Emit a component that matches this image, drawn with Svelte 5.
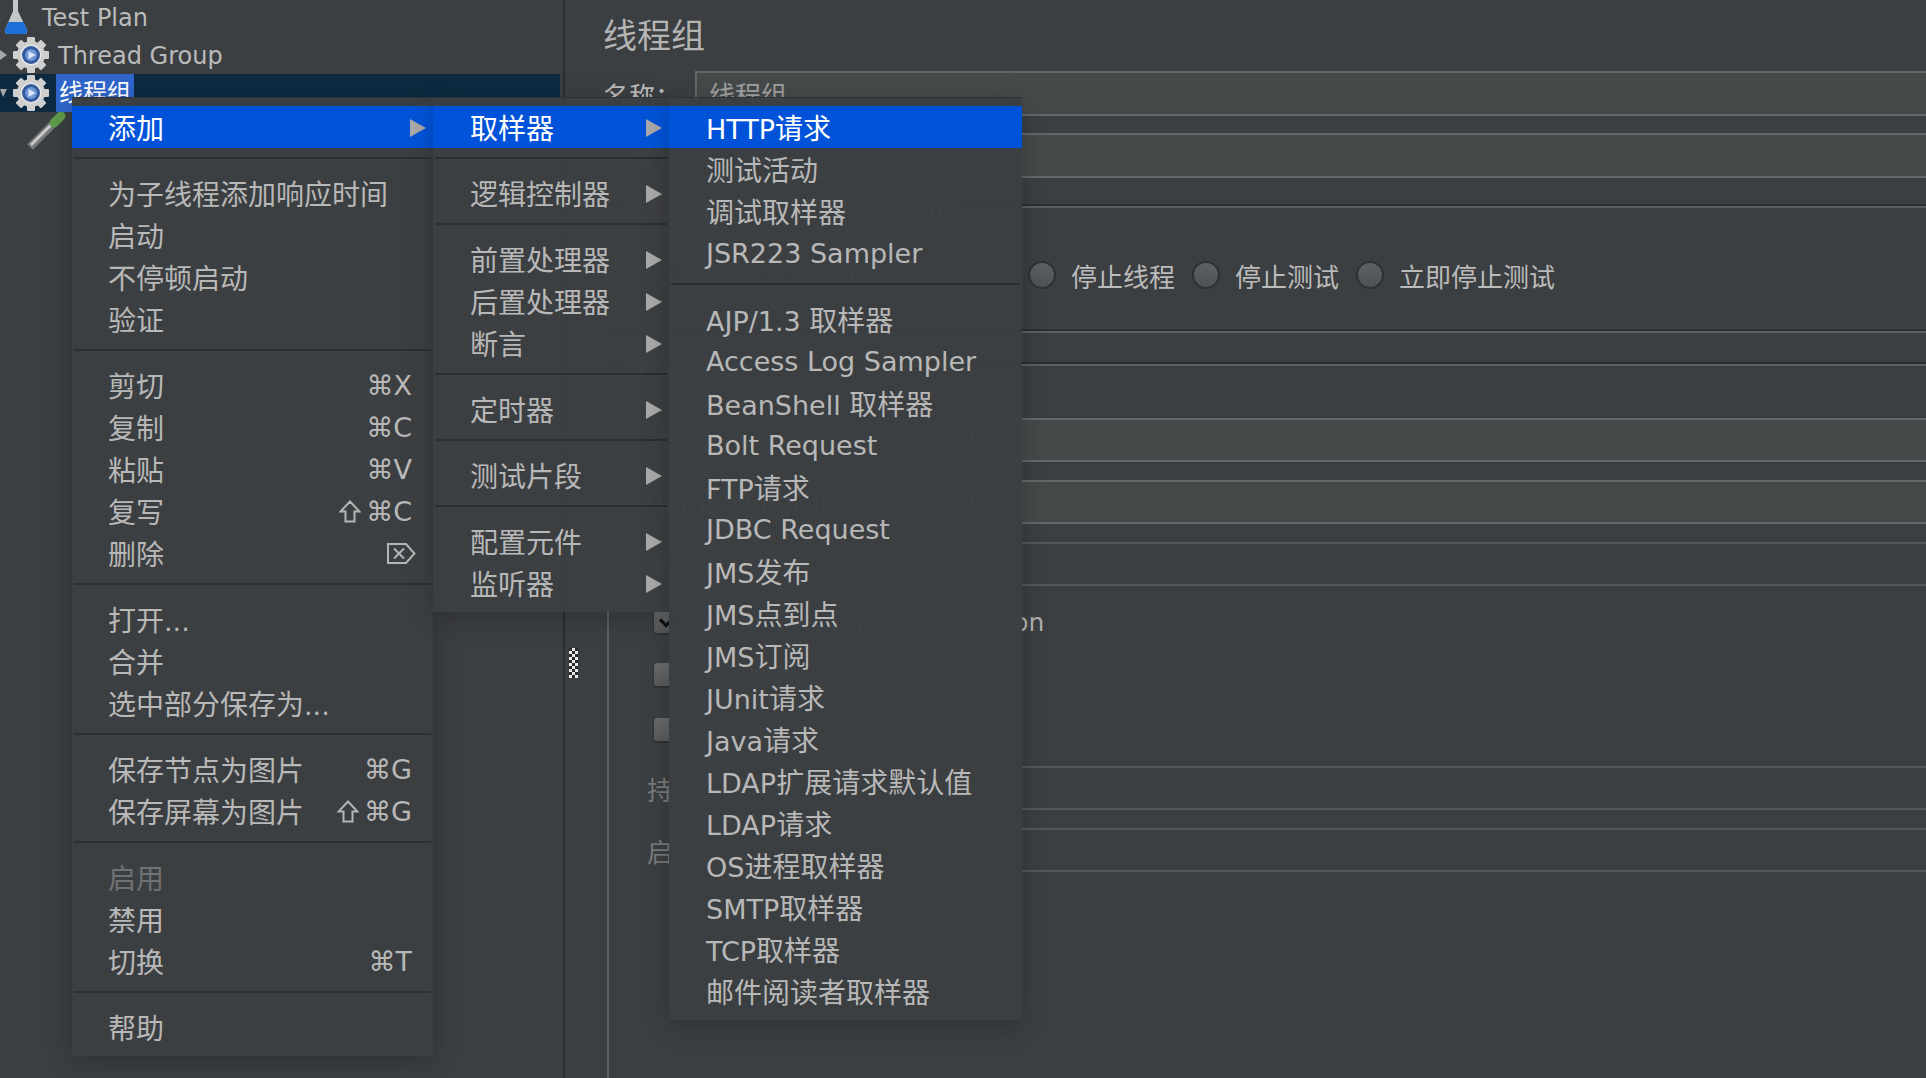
<script>
  const mainMenu = [
    [{ t: "添加", arrow: true, on: true }],
    [{ t: "为子线程添加响应时间" }, { t: "启动" }, { t: "不停顿启动" }, { t: "验证" }],
    [
      { t: "剪切", key: "⌘X" },
      { t: "复制", key: "⌘C" },
      { t: "粘贴", key: "⌘V" },
      { t: "复写", key: "⌘C", shift: true },
      { t: "删除", del: true }
    ],
    [{ t: "打开..." }, { t: "合并" }, { t: "选中部分保存为..." }],
    [
      { t: "保存节点为图片", key: "⌘G" },
      { t: "保存屏幕为图片", key: "⌘G", shift: true }
    ],
    [{ t: "启用", off: true }, { t: "禁用" }, { t: "切换", key: "⌘T" }],
    [{ t: "帮助" }]
  ];

  const addMenu = [
    [{ t: "取样器", arrow: true, on: true }],
    [{ t: "逻辑控制器", arrow: true }],
    [
      { t: "前置处理器", arrow: true },
      { t: "后置处理器", arrow: true },
      { t: "断言", arrow: true }
    ],
    [{ t: "定时器", arrow: true }],
    [{ t: "测试片段", arrow: true }],
    [
      { t: "配置元件", arrow: true },
      { t: "监听器", arrow: true }
    ]
  ];

  const samplerMenu = [
    [{ t: "HTTP请求", on: true }, { t: "测试活动" }, { t: "调试取样器" }, { t: "JSR223 Sampler" }],
    [
      "AJP/1.3 取样器", "Access Log Sampler", "BeanShell 取样器", "Bolt Request", "FTP请求",
      "JDBC Request", "JMS发布", "JMS点到点", "JMS订阅", "JUnit请求", "Java请求",
      "LDAP扩展请求默认值", "LDAP请求", "OS进程取样器", "SMTP取样器", "TCP取样器", "邮件阅读者取样器"
    ].map((t) => ({ t }))
  ];

  const menus = [
    { cls: "main", groups: mainMenu },
    { cls: "add", groups: addMenu },
    { cls: "sampler", groups: samplerMenu }
  ];

  const actions = ["继续", "启动下一进程循环", "停止线程", "停止测试", "立即停止测试"];
  const teeth = [0, 45, 90, 135, 180, 225, 270, 315];

  // latin runs are set a little smaller than the CJK ones
  const runs = (t) =>
    t.split(/([\x00-\x7f]+)/).filter(Boolean).map((s) => ({ s, lat: s.charCodeAt(0) < 128 }));
</script>

{#snippet gear()}
  <svg class="gear" width="38" height="38" viewBox="0 0 38 38">
    <g fill="#cfcfcf">
      {#each teeth as a}
        <rect x="15" y="1" width="8" height="9" rx="1" transform="rotate({a} 19 19)" />
      {/each}
      <circle cx="19" cy="19" r="14" />
    </g>
    <circle cx="19" cy="19" r="10.5" fill="#e4e6e8" />
    <circle cx="19" cy="19" r="9" fill="#34589c" />
    <circle cx="19" cy="19" r="6" fill="#6f98d8" />
    <path d="M16.5 15 L23.5 19 L16.5 23 Z" fill="#dfe8f6" />
  </svg>
{/snippet}

<div class="app">
  <div class="tree">
    <div class="row plan">
      <svg width="26" height="36" viewBox="0 0 26 36">
        <path d="M10 0 H15 V12 L24 31 Q25 35 21 35 H5 Q1 35 2 31 L10 12 Z" fill="#c4c6c8" />
        <path d="M5.5 23 H20.5 L24 31 Q25 35 21 35 H5 Q1 35 2 31 Z" fill="#1c6fd6" />
      </svg>
      <span>Test Plan</span>
    </div>
    <div class="row group-node">
      <svg class="twist" width="7" height="10" viewBox="0 0 7 10"><path d="M0 0 L7 5 L0 10 Z" fill="#a8a8a8" /></svg>
      {@render gear()}
      <span>Thread Group</span>
    </div>
    <div class="row group-node selected">
      <svg class="twist" width="7" height="10" viewBox="0 0 7 10"><path d="M0 1 H7 L3 9 Z" fill="#a8a8a8" /></svg>
      {@render gear()}
      <span class="picked">线程组</span>
    </div>
    <div class="row child">
      <svg width="40" height="38" viewBox="0 0 40 38">
        <path d="M3 35 L26 12" stroke="#77797a" stroke-width="8" />
        <path d="M4 33 L25 12" stroke="#cfcfcf" stroke-width="2.5" />
        <path d="M27 11 L34 4" stroke="#5f9a4a" stroke-width="9" stroke-linecap="round" />
      </svg>
      <span>HTTP请求</span>
    </div>
  </div>

  <div class="detail">
    <div class="title">线程组</div>
    <div class="name-row">
      <span class="name-label">名称：</span>
      <div class="field"><span>线程组</span></div>
    </div>
    <div class="name-row">
      <span class="name-label">注释：</span>
      <div class="field"></div>
    </div>

    <div class="box first">
      <span class="legend">在取样器错误后要执行的动作</span>
      <div class="radios">
        {#each actions as a}
          <label class="radio"><i></i>{a}</label>
        {/each}
      </div>
    </div>

    <div class="box second">
      <span class="legend">线程属性</span>
      <div class="prop"><span>线程数：</span><div class="field"><span>10</span></div></div>
      <div class="prop"><span>Ramp-Up时间(秒)：</span><div class="field"><span>1</span></div></div>
      <div class="prop"><span>循环次数 永远</span><div class="field plain"></div></div>
      <div class="check one"><i class="ticked"></i>Same user on each iteration</div>
      <div class="check two"><i></i>延迟创建线程直到需要</div>
      <div class="check three"><i></i>调度器</div>
      <div class="prop dim timed"><span>持续时间（秒）</span><div class="field plain"></div></div>
      <div class="prop dim"><span>启动延迟（秒）</span><div class="field plain"></div></div>
    </div>
  </div>

  <div class="grip"></div>

  {#each menus as menu}
    <div class="menu {menu.cls}">
      {#each menu.groups as group, g}
        {#if g > 0}<div class="sep"></div>{/if}
        {#each group as item}
          <div class="item" class:on={item.on} class:off={item.off}>
            <span>{#each runs(item.t) as r}{#if r.lat}<span class="lat">{r.s}</span>{:else}{r.s}{/if}{/each}</span>
            {#if item.key}
              <span class="key">
                {#if item.shift}
                  <svg width="22" height="23" viewBox="0 0 22 23" fill="none" stroke="#b4b4b4" stroke-width="2">
                    <path d="M11 1.5 L20.5 11.5 H15.5 V21.5 H6.5 V11.5 H1.5 Z" />
                  </svg>
                {/if}
                {item.key}
              </span>
            {/if}
            {#if item.del}
              <svg class="del" width="29" height="21" viewBox="0 0 29 21" fill="none" stroke="#b4b4b4" stroke-width="2">
                <path d="M1 1 H19 L27.5 10.5 L19 20 H1 Z" />
                <path d="M7 5.5 L17 15.5 M17 5.5 L7 15.5" />
              </svg>
            {/if}
            {#if item.arrow}
              <svg class="arrow" width="16" height="18" viewBox="0 0 16 18"><path d="M0 0 L16 9 L0 18 Z" fill="#a9a9a9" /></svg>
            {/if}
          </div>
        {/each}
      {/each}
    </div>
  {/each}
</div>

<style>
  :global(body) {
    margin: 0;
    background: #3c3f41;
    overflow: hidden;
  }

  .app {
    position: relative;
    display: flex;
    width: 1926px;
    height: 1078px;
    overflow: hidden;
    background: #3c3f41;
    color: #bbbbbb;
    font-family: "DejaVu Sans", "Noto Sans CJK SC", sans-serif;
  }

  /* tree on the left */
  .tree {
    flex: none;
    width: 563px;
    margin-top: -2px;
    border-right: 2px solid #2a2c2d;
    font-size: 24px;
  }
  .row {
    display: flex;
    align-items: center;
    height: 38px;
    width: 560px;
    white-space: nowrap;
  }
  .row > span {
    padding-top: 2px;
  }
  .plan svg {
    margin-left: 3px;
    margin-right: 13px;
  }
  .group-node .twist {
    flex: none;
  }
  .group-node .gear {
    margin-left: 5px;
    margin-right: 8px;
    flex: none;
  }
  .selected {
    background: #0d2a40;
  }
  .row > .picked {
    display: block;
    margin-left: -2px;
    width: 75px;
    padding: 0 0 0 3px;
    line-height: 38px;
    background: #2f65ca;
    color: #ffffff;
  }
  .child svg {
    margin-left: 27px;
    margin-right: 10px;
  }

  /* detail pane */
  .detail {
    flex: none;
    width: 1381px;
    padding-left: 38px;
    font-size: 26px;
  }
  .title {
    height: 71px;
    line-height: 72px;
    font-size: 34px;
    color: #b4b4b4;
  }
  .name-row {
    display: flex;
    align-items: center;
    height: 45px;
    margin-bottom: 17px;
  }
  .name-label {
    flex: none;
    width: 92px;
    padding-top: 2px;
  }
  .field {
    flex: 1;
    box-sizing: border-box;
    height: 100%;
    display: flex;
    align-items: center;
    padding-left: 12px;
    background: #46494a;
    border-top: 2px solid #646768;
    border-bottom: 2px solid #646768;
    border-left: 2px solid #646768;
    color: #a0a0a0;
  }
  .field.plain {
    background: none;
    border-color: #54575a;
  }

  .box {
    position: relative;
    margin-left: 4px;
    border-top: 2px solid #2c2e30;
    box-shadow: inset 2px 2px 0 #5c5f61;
  }
  .box.first {
    margin-top: 26px;
    padding: 48px 0 33px 40px;
    border-bottom: 2px solid #2c2e30;
    box-shadow: inset 2px 2px 0 #5c5f61, 0 2px 0 #5c5f61;
  }
  .box.second {
    margin-top: 31px;
    padding: 54px 0 260px 40px;
  }
  .legend {
    position: absolute;
    left: 16px;
    top: -17px;
    line-height: 36px;
    background: #3c3f41;
  }
  .radios {
    display: flex;
    align-items: center;
    gap: 16px;
    height: 42px;
  }
  .radio {
    display: flex;
    align-items: center;
    gap: 15px;
    white-space: nowrap;
  }
  .radio i {
    flex: none;
    box-sizing: border-box;
    width: 28px;
    height: 28px;
    margin-left: 1px;
    border-radius: 50%;
    background: linear-gradient(#5f6264, #4e5153);
    border: 2px solid #2f3133;
  }

  .prop {
    display: flex;
    align-items: center;
    height: 44px;
    margin-bottom: 18px;
  }
  .prop > span {
    flex: none;
    width: 303px;
    white-space: nowrap;
  }
  .prop.dim > span {
    color: #777a7c;
  }
  .prop.timed {
    margin-top: 24px;
  }
  .check {
    display: flex;
    align-items: center;
    gap: 11px;
    height: 24px;
    margin-left: 6px;
    font-size: 25px;
    white-space: nowrap;
    color: #b0b0b0;
  }
  .check.one {
    margin-top: 24px;
  }
  .check.two {
    margin-top: 29px;
  }
  .check.three {
    margin-top: 31px;
  }
  .check i {
    position: relative;
    flex: none;
    box-sizing: border-box;
    width: 26px;
    height: 25px;
    border-radius: 4px;
    background: linear-gradient(#6a6c6e, #58595b);
    border-bottom: 2px solid #2f3133;
    border-left: 1px solid #333537;
  }
  .check i.ticked::after {
    content: "";
    position: absolute;
    left: 6px;
    top: 3px;
    width: 14px;
    height: 7px;
    border-left: 3px solid #101010;
    border-bottom: 3px solid #101010;
    transform: rotate(-45deg);
  }

  .grip {
    position: absolute;
    left: 569px;
    top: 648px;
    width: 9px;
    height: 30px;
    background: repeating-conic-gradient(#e8e8e8 0 25%, #2a2a2a 0 50%) 0 0 / 6px 6px;
  }

  /* popup menus */
  .menu {
    position: absolute;
    top: 98px;
    box-sizing: border-box;
    padding: 8px 0;
    background: rgba(60, 63, 65, 0.985);
    box-shadow: 0 6px 24px rgba(0, 0, 0, 0.22), 0 -1px 0 #333537;
    font-size: 28px;
    white-space: nowrap;
  }
  .menu.main {
    left: 72px;
    width: 361px;
  }
  .menu.add {
    left: 433px;
    width: 236px;
  }
  .menu.sampler {
    left: 669px;
    width: 353px;
  }
  .item {
    display: flex;
    align-items: center;
    justify-content: space-between;
    height: 42px;
    padding: 0 7px 0 36px;
    color: #b8b8b8;
  }
  .add .item,
  .sampler .item {
    padding-left: 37px;
  }
  .item.on {
    background: #0053d8;
    color: #ffffff;
  }
  .item.off {
    color: #6f7173;
  }
  .lat {
    font-size: 27px;
  }
  .arrow {
    margin-top: 2px;
  }
  .key {
    display: flex;
    align-items: center;
    gap: 5px;
    margin-top: 1px;
    margin-right: 14px;
    font-size: 27px;
  }
  .del {
    margin-right: 10px;
  }
  .sep {
    height: 2px;
    margin: 9px 2px 13px;
    background: #2c2e30;
  }
</style>
